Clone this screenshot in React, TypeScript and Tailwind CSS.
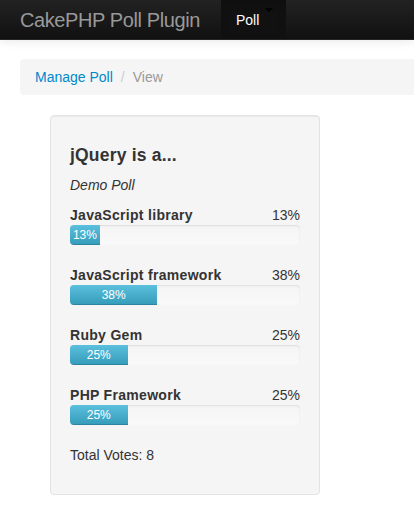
import React from "react";

const options = [
  { label: "JavaScript library", pct: 13 },
  { label: "JavaScript framework", pct: 38 },
  { label: "Ruby Gem", pct: 25 },
  { label: "PHP Framework", pct: 25 },
];

// --- Progress bar, Bootstrap 2 "info" look ---
function PollBar({ pct }: { pct: number }) {
  return (
    <div className="mb-5 h-5 w-full overflow-hidden rounded bg-gradient-to-b from-[#f5f5f5] to-[#f9f9f9] shadow-[inset_0_1px_2px_rgba(0,0,0,0.1)]">
      <div
        className="h-full bg-gradient-to-b from-[#5bc0de] to-[#339bb9] text-center text-[12px] leading-5 text-white shadow-[inset_0_-1px_0_rgba(0,0,0,0.15)]"
        style={{ width: `${pct}%` }}
      >
        {pct}%
      </div>
    </div>
  );
}

export default function App() {
  return (
    <div className="min-h-[510px] bg-white text-[14px] leading-5 text-[#333] font-['Liberation_Sans',Arial,sans-serif]">
      {/* Navbar */}
      <div className="flex h-10 items-stretch border-b border-[#252525] bg-gradient-to-b from-[#222] to-[#111] shadow-[0_1px_10px_rgba(0,0,0,0.1)]">
        <div className="px-5 py-[10px] text-[20px] leading-5 tracking-[-0.4px] text-[#999]">CakePHP Poll Plugin</div>
        <div className="relative ml-[1px] flex items-center bg-[#111] pl-[15px] pr-[27px] text-white shadow-[inset_0_3px_8px_rgba(0,0,0,0.125)]">
          Poll
          <span className="absolute left-[44px] top-[8px] h-0 w-0 border-x-4 border-t-4 border-x-transparent border-t-black" />
        </div>
      </div>

      {/* Breadcrumb */}
      <div className="ml-5 mt-[19px] rounded-l bg-[#f5f5f5] px-[15px] py-2">
        <span className="text-[#0088cc]">Manage Poll</span>
        <span className="px-[8px] text-[#ccc]">/</span>
        <span className="text-[#999]">View</span>
      </div>

      {/* Poll card */}
      <div className="ml-[50px] mt-5 w-[270px] rounded border border-[#e3e3e3] bg-[#f5f5f5] p-[19px] shadow-[inset_0_1px_1px_rgba(0,0,0,0.05)]">
        <h4 className="my-[10px] text-[17.5px] font-bold leading-5 tracking-[0.2px]">jQuery is a...</h4>
        <p className="mb-[10px] italic">Demo Poll</p>
        {options.map((o) => (
          <div key={o.label}>
            <div className="flex justify-between">
              <span className="font-bold tracking-[0.3px]">{o.label}</span>
              <span>{o.pct}%</span>
            </div>
            <PollBar pct={o.pct} />
          </div>
        ))}
        <p className="mb-[10px]">Total Votes: 8</p>
      </div>
    </div>
  );
}
